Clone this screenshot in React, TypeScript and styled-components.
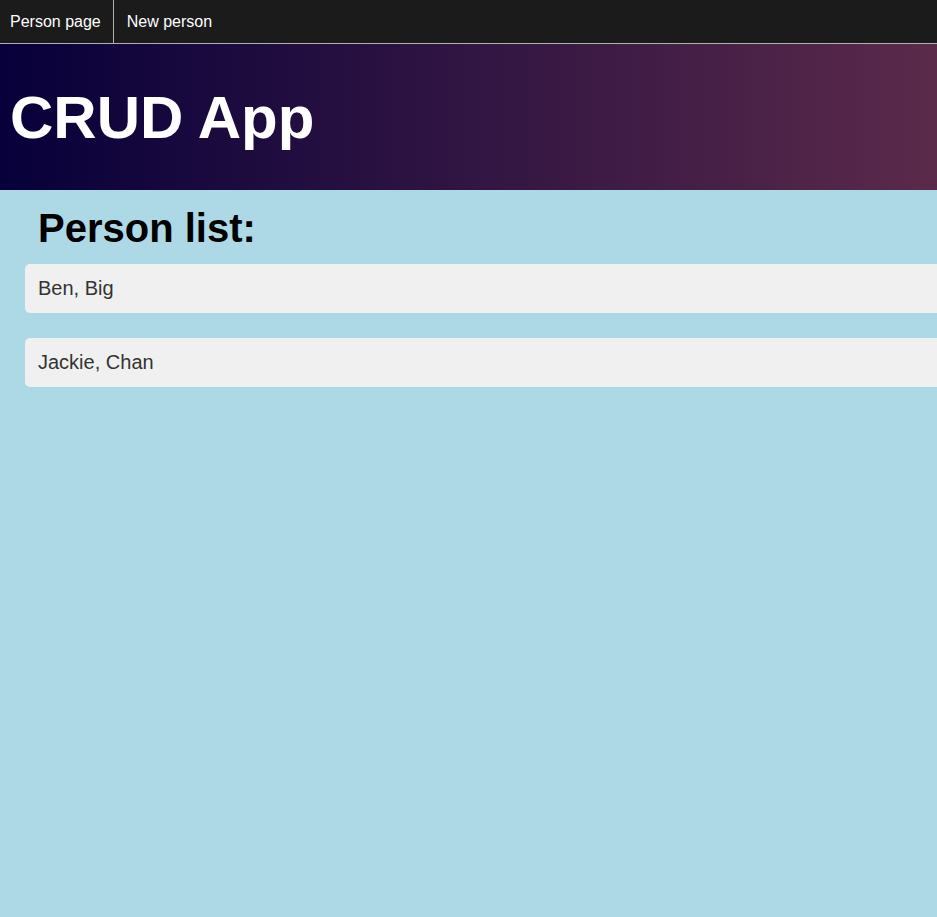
import React from "react";
import styled, { createGlobalStyle } from "styled-components";

const GlobalStyle = createGlobalStyle`
  html, body {
    margin: 0;
    padding: 0;
    background: #add8e6;
    font-family: "Liberation Sans", Arial, sans-serif;
    overflow-x: hidden;
  }
`;

const Nav = styled.nav`
  display: flex;
  height: 43px;
  background: #1b1b1b;
  border-bottom: 1px solid #b0b0b0;
`;

const NavLink = styled.a<{ $divider?: boolean }>`
  display: flex;
  align-items: center;
  padding: 0 12px 0 10px;
  color: #ffffff;
  font-size: 16px;
  text-decoration: none;
  border-right: ${({ $divider }) => ($divider ? "1px solid #b0b0b0" : "none")};
  & + & {
    padding-left: 13px;
  }
`;

const Header = styled.header`
  height: 146px;
  display: flex;
  align-items: center;
  padding-left: 10px;
  background: linear-gradient(to right, #07003a, #5b2a4b);
`;

const Title = styled.h1`
  margin: 0;
  color: #ffffff;
  font-size: 60px;
  font-weight: 700;
`;

const Main = styled.main`
  display: flex;
  flex-direction: column;
  padding-left: 25px;
`;

const Heading = styled.h2`
  margin: 15px 0 13px 13px;
  font-size: 40px;
  line-height: 46px;
  font-weight: 700;
  color: #000;
`;

const List = styled.ul`
  list-style: none;
  margin: 0;
  padding: 0;
  display: flex;
  flex-direction: column;
  gap: 25px;
`;

const Row = styled.li`
  height: 49px;
  display: flex;
  align-items: center;
  padding-left: 13px;
  background: #f0f0f0;
  border-radius: 5px 0 0 5px;
  color: #333333;
  font-size: 20px;
`;

const people = [
  { first: "Ben", last: "Big" },
  { first: "Jackie", last: "Chan" },
];

export default function App() {
  return (
    <>
      <GlobalStyle />
      <Nav>
        <NavLink href="#" $divider>
          Person page
        </NavLink>
        <NavLink href="#">New person</NavLink>
      </Nav>
      <Header>
        <Title>CRUD App</Title>
      </Header>
      <Main>
        <Heading>Person list:</Heading>
        <List>
          {people.map((p) => (
            <Row key={p.first}>
              {p.first}, {p.last}
            </Row>
          ))}
        </List>
      </Main>
    </>
  );
}
